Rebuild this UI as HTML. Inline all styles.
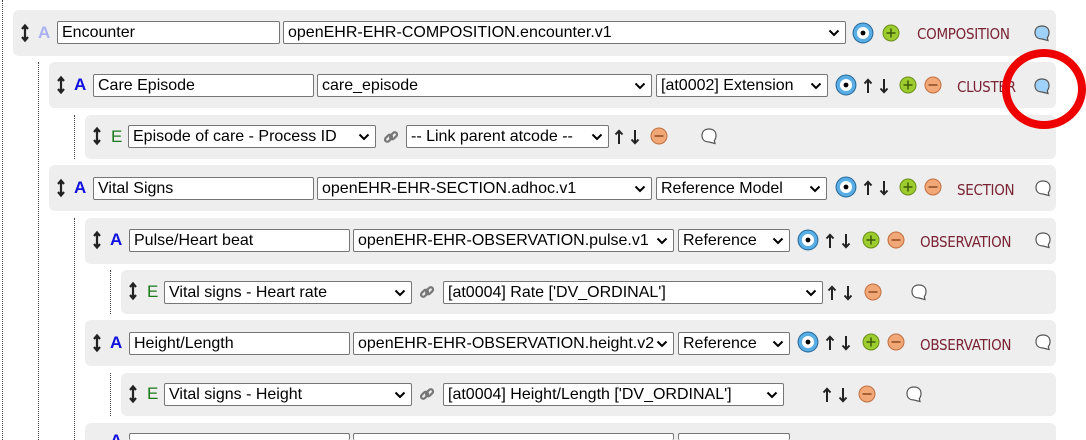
<!DOCTYPE html>
<html><head><meta charset="utf-8"><style>
html,body{margin:0;overflow:hidden;height:440px;}
body{width:1086px;background:#fff;font-family:"Liberation Sans",Arial,sans-serif;}
#w{position:relative;width:1086px;height:440px;overflow:hidden;}
.b{position:absolute;background:#eeeeee;border-radius:6px;right:30px;}
.d{position:absolute;border-left:1px dotted #444;width:0;}
.in,.se{position:absolute;height:23px;box-sizing:border-box;border:1px solid #767676;border-radius:2px;background:#fff;font-size:16px;line-height:22px;padding-left:4px;color:#000;white-space:nowrap;overflow:hidden;}
.se{padding-right:20px;}
.se svg{position:absolute;right:5px;top:7px;background:#fff;}
.t{position:absolute;font-size:17px;font-weight:bold;}
.l{position:absolute;font-size:15px;color:#7a2333;font-family:"DejaVu Sans Condensed","Liberation Sans Narrow","Liberation Sans",sans-serif;letter-spacing:-0.3px;}
.ic{position:absolute;}
</style></head><body><div id="w">
<svg width="0" height="0" style="position:absolute"><defs>
<symbol id="chev" viewBox="0 0 12 8"><path d="M1.5 1.5 L6 6 L10.5 1.5" fill="none" stroke="#000" stroke-width="2"/></symbol>
<symbol id="eye" viewBox="0 0 20 20"><circle cx="10" cy="10" r="9" fill="#5aaee6" stroke="#2a6d9e" stroke-width="1"/><circle cx="10" cy="10" r="5.5" fill="#fff"/><circle cx="10" cy="10" r="2.2" fill="#000"/></symbol>
<symbol id="plus" viewBox="0 0 18 18"><circle cx="9" cy="9" r="8" fill="#9ccc2e" stroke="#6a8d1a"/><path d="M9 4.5V13.5M4.5 9H13.5" stroke="#3d5a0a" stroke-width="1.5"/></symbol>
<symbol id="minus" viewBox="0 0 18 18"><circle cx="9" cy="9" r="8" fill="#f2a776" stroke="#c07040"/><path d="M4.5 9H13.5" stroke="#8a4a20" stroke-width="1.5"/></symbol>
<symbol id="bb" viewBox="0 0 18 18"><path d="M9 2C4.5 2 2 4.5 2 8.5S4.5 15 9 15L15 16.5 14.3 13.5C15.5 12.3 16 10.6 16 8.5 16 4.5 13.5 2 9 2Z" fill="#9fd0f7" stroke="#555" stroke-width="1.2"/></symbol>
<symbol id="bw" viewBox="0 0 18 18"><path d="M9 2C4.5 2 2 4.5 2 8.5S4.5 15 9 15L15 16.5 14.3 13.5C15.5 12.3 16 10.6 16 8.5 16 4.5 13.5 2 9 2Z" fill="#fff" stroke="#555" stroke-width="1.2"/></symbol>
<symbol id="ud" viewBox="0 0 10 20"><path d="M5 3V17M2 6L5 2.5 8 6M2 14L5 17.5 8 14" fill="none" stroke="#222" stroke-width="2.2"/></symbol>
<symbol id="arr" viewBox="0 0 26 16"><path d="M5 15V2M1.5 5.5L5 1.8 8.5 5.5M21 1V14M17.5 10.5L21 14.2 24.5 10.5" fill="none" stroke="#222" stroke-width="2"/></symbol>
<symbol id="lnk" viewBox="0 0 16 16"><g fill="none" stroke="#777" stroke-width="2.2"><rect x="1.5" y="7" width="8" height="4.5" rx="2.2" transform="rotate(-45 5.5 9.2)"/><rect x="6.5" y="4.5" width="8" height="4.5" rx="2.2" transform="rotate(-45 10.5 6.7)"/></g></symbol>
</defs></svg>

<div class="d" style="left:2px;top:0;height:440px"></div>
<div class="d" style="left:38px;top:62px;height:378px"></div>
<div class="d" style="left:74px;top:115px;height:44px"></div>
<div class="d" style="left:74px;top:218px;height:222px"></div>
<div class="d" style="left:110px;top:270px;height:44px"></div>
<div class="d" style="left:110px;top:373px;height:43px"></div>

<!-- Row1 -->
<div class="b" style="left:13px;top:10px;height:46px"></div>
<svg class="ic" style="left:20px;top:23px" width="10" height="20"><use href="#ud"/></svg>
<div class="t" style="left:38px;top:23px;color:#aab0f0">A</div>
<div class="in" style="left:57px;top:21px;width:223px">Encounter</div>
<div class="se" style="left:283px;top:21px;width:563px">openEHR-EHR-COMPOSITION.encounter.v1<svg width="12" height="8"><use href="#chev"/></svg></div>
<svg class="ic" style="left:852px;top:22px" width="22" height="22"><use href="#eye"/></svg>
<svg class="ic" style="left:882px;top:24px" width="18" height="18"><use href="#plus"/></svg>
<div class="l" style="left:917px;top:25px">COMPOSITION</div>
<svg class="ic" style="left:1033px;top:24px" width="18" height="18"><use href="#bb"/></svg>

<!-- Row2 -->
<div class="b" style="left:49px;top:62px;height:46px"></div>
<svg class="ic" style="left:56px;top:75px" width="10" height="20"><use href="#ud"/></svg>
<div class="t" style="left:74px;top:75px;color:#1010e0">A</div>
<div class="in" style="left:93px;top:74px;width:221px">Care Episode</div>
<div class="se" style="left:317px;top:74px;width:335px">care_episode<svg width="12" height="8"><use href="#chev"/></svg></div>
<div class="se" style="left:656px;top:74px;width:172px">[at0002] Extension<svg width="12" height="8"><use href="#chev"/></svg></div>
<svg class="ic" style="left:835px;top:74px" width="22" height="22"><use href="#eye"/></svg>
<svg class="ic" style="left:863px;top:78px" width="26" height="16"><use href="#arr"/></svg>
<svg class="ic" style="left:899px;top:76px" width="18" height="18"><use href="#plus"/></svg>
<svg class="ic" style="left:924px;top:76px" width="18" height="18"><use href="#minus"/></svg>
<div class="l" style="left:957px;top:78px">CLUSTER</div>
<svg class="ic" style="left:1033px;top:77px" width="18" height="18"><use href="#bb"/></svg>

<!-- Row3 -->
<div class="b" style="left:85px;top:115px;height:44px"></div>
<svg class="ic" style="left:92px;top:126px" width="10" height="20"><use href="#ud"/></svg>
<div class="t" style="left:111px;top:127px;color:#1a7a1a;font-weight:normal">E</div>
<div class="se" style="left:128px;top:125px;width:248px">Episode of care - Process ID<svg width="12" height="8"><use href="#chev"/></svg></div>
<svg class="ic" style="left:383px;top:129px" width="16" height="16"><use href="#lnk"/></svg>
<div class="se" style="left:406px;top:125px;width:203px">-- Link parent atcode --<svg width="12" height="8"><use href="#chev"/></svg></div>
<svg class="ic" style="left:614px;top:129px" width="26" height="16"><use href="#arr"/></svg>
<svg class="ic" style="left:650px;top:127px" width="18" height="18"><use href="#minus"/></svg>
<svg class="ic" style="left:700px;top:127px" width="18" height="18"><use href="#bw"/></svg>

<!-- Row4 -->
<div class="b" style="left:49px;top:165px;height:46px"></div>
<svg class="ic" style="left:56px;top:178px" width="10" height="20"><use href="#ud"/></svg>
<div class="t" style="left:74px;top:178px;color:#1010e0">A</div>
<div class="in" style="left:93px;top:177px;width:221px">Vital Signs</div>
<div class="se" style="left:317px;top:177px;width:335px">openEHR-EHR-SECTION.adhoc.v1<svg width="12" height="8"><use href="#chev"/></svg></div>
<div class="se" style="left:656px;top:177px;width:171px">Reference Model<svg width="12" height="8"><use href="#chev"/></svg></div>
<svg class="ic" style="left:835px;top:176px" width="22" height="22"><use href="#eye"/></svg>
<svg class="ic" style="left:863px;top:180px" width="26" height="16"><use href="#arr"/></svg>
<svg class="ic" style="left:899px;top:178px" width="18" height="18"><use href="#plus"/></svg>
<svg class="ic" style="left:924px;top:178px" width="18" height="18"><use href="#minus"/></svg>
<div class="l" style="left:957px;top:181px">SECTION</div>
<svg class="ic" style="left:1034px;top:179px" width="18" height="18"><use href="#bw"/></svg>

<!-- Row5 -->
<div class="b" style="left:85px;top:218px;height:46px"></div>
<svg class="ic" style="left:92px;top:230px" width="10" height="20"><use href="#ud"/></svg>
<div class="t" style="left:110px;top:230px;color:#1010e0">A</div>
<div class="in" style="left:129px;top:229px;width:221px">Pulse/Heart beat</div>
<div class="se" style="left:353px;top:229px;width:321px">openEHR-EHR-OBSERVATION.pulse.v1<svg width="12" height="8"><use href="#chev"/></svg></div>
<div class="se" style="left:678px;top:229px;width:112px">Reference<svg width="12" height="8"><use href="#chev"/></svg></div>
<svg class="ic" style="left:797px;top:229px" width="22" height="22"><use href="#eye"/></svg>
<svg class="ic" style="left:825px;top:233px" width="26" height="16"><use href="#arr"/></svg>
<svg class="ic" style="left:862px;top:231px" width="18" height="18"><use href="#plus"/></svg>
<svg class="ic" style="left:887px;top:231px" width="18" height="18"><use href="#minus"/></svg>
<div class="l" style="left:920px;top:233px">OBSERVATION</div>
<svg class="ic" style="left:1034px;top:231px" width="18" height="18"><use href="#bw"/></svg>

<!-- Row6 -->
<div class="b" style="left:121px;top:270px;height:44px"></div>
<svg class="ic" style="left:128px;top:281px" width="10" height="20"><use href="#ud"/></svg>
<div class="t" style="left:147px;top:282px;color:#1a7a1a;font-weight:normal">E</div>
<div class="se" style="left:164px;top:281px;width:248px">Vital signs - Heart rate<svg width="12" height="8"><use href="#chev"/></svg></div>
<svg class="ic" style="left:419px;top:284px" width="16" height="16"><use href="#lnk"/></svg>
<div class="se" style="left:443px;top:281px;width:380px">[at0004] Rate ['DV_ORDINAL']<svg width="12" height="8"><use href="#chev"/></svg></div>
<svg class="ic" style="left:827px;top:285px" width="26" height="16"><use href="#arr"/></svg>
<svg class="ic" style="left:864px;top:283px" width="18" height="18"><use href="#minus"/></svg>
<svg class="ic" style="left:910px;top:283px" width="18" height="18"><use href="#bw"/></svg>

<!-- Row7 -->
<div class="b" style="left:85px;top:320px;height:46px"></div>
<svg class="ic" style="left:92px;top:333px" width="10" height="20"><use href="#ud"/></svg>
<div class="t" style="left:110px;top:333px;color:#1010e0">A</div>
<div class="in" style="left:129px;top:332px;width:221px">Height/Length</div>
<div class="se" style="left:353px;top:332px;width:321px">openEHR-EHR-OBSERVATION.height.v2<svg width="12" height="8"><use href="#chev"/></svg></div>
<div class="se" style="left:678px;top:332px;width:112px">Reference<svg width="12" height="8"><use href="#chev"/></svg></div>
<svg class="ic" style="left:797px;top:331px" width="22" height="22"><use href="#eye"/></svg>
<svg class="ic" style="left:825px;top:335px" width="26" height="16"><use href="#arr"/></svg>
<svg class="ic" style="left:862px;top:333px" width="18" height="18"><use href="#plus"/></svg>
<svg class="ic" style="left:887px;top:333px" width="18" height="18"><use href="#minus"/></svg>
<div class="l" style="left:920px;top:336px">OBSERVATION</div>
<svg class="ic" style="left:1034px;top:333px" width="18" height="18"><use href="#bw"/></svg>

<!-- Row8 -->
<div class="b" style="left:121px;top:373px;height:43px"></div>
<svg class="ic" style="left:128px;top:384px" width="10" height="20"><use href="#ud"/></svg>
<div class="t" style="left:147px;top:384px;color:#1a7a1a;font-weight:normal">E</div>
<div class="se" style="left:164px;top:383px;width:248px">Vital signs - Height<svg width="12" height="8"><use href="#chev"/></svg></div>
<svg class="ic" style="left:419px;top:386px" width="16" height="16"><use href="#lnk"/></svg>
<div class="se" style="left:443px;top:383px;width:341px">[at0004] Height/Length ['DV_ORDINAL']<svg width="12" height="8"><use href="#chev"/></svg></div>
<svg class="ic" style="left:822px;top:387px" width="26" height="16"><use href="#arr"/></svg>
<svg class="ic" style="left:858px;top:385px" width="18" height="18"><use href="#minus"/></svg>
<svg class="ic" style="left:905px;top:385px" width="18" height="18"><use href="#bw"/></svg>

<!-- Row9 partial (clipped) -->
<div class="b" style="left:85px;top:423px;height:17px;border-radius:6px 6px 0 0"></div>
<div class="t" style="left:110px;top:431px;color:#1010e0;height:9px;overflow:hidden;line-height:20px">A</div>
<div class="in" style="left:129px;top:433px;width:221px;height:7px;border-bottom:none"></div>
<div class="in" style="left:353px;top:433px;width:321px;height:7px;border-bottom:none"></div>
<div class="in" style="left:678px;top:433px;width:112px;height:7px;border-bottom:none"></div>

<!-- red circle -->
<div style="position:absolute;left:1002px;top:49px;width:68px;height:64px;border:8px solid #ee0000;border-radius:50%;"></div>
</div></body></html>
